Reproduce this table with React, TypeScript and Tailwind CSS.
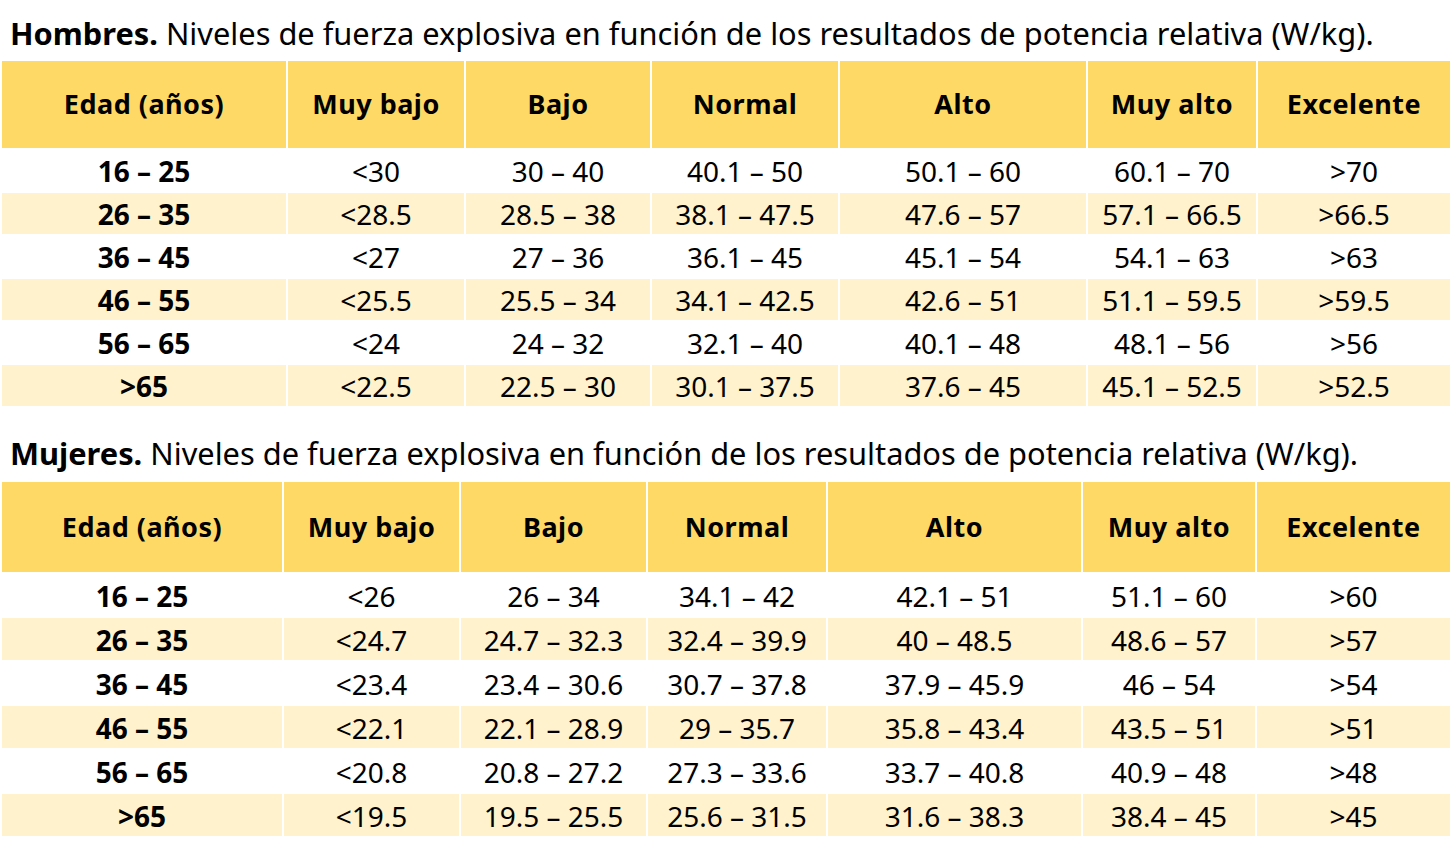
const headers = ['Edad (años)', 'Muy bajo', 'Bajo', 'Normal', 'Alto', 'Muy alto', 'Excelente'];

const men = [
  ['16 – 25', '<30', '30 – 40', '40.1 – 50', '50.1 – 60', '60.1 – 70', '>70'],
  ['26 – 35', '<28.5', '28.5 – 38', '38.1 – 47.5', '47.6 – 57', '57.1 – 66.5', '>66.5'],
  ['36 – 45', '<27', '27 – 36', '36.1 – 45', '45.1 – 54', '54.1 – 63', '>63'],
  ['46 – 55', '<25.5', '25.5 – 34', '34.1 – 42.5', '42.6 – 51', '51.1 – 59.5', '>59.5'],
  ['56 – 65', '<24', '24 – 32', '32.1 – 40', '40.1 – 48', '48.1 – 56', '>56'],
  ['>65', '<22.5', '22.5 – 30', '30.1 – 37.5', '37.6 – 45', '45.1 – 52.5', '>52.5'],
];

const women = [
  ['16 – 25', '<26', '26 – 34', '34.1 – 42', '42.1 – 51', '51.1 – 60', '>60'],
  ['26 – 35', '<24.7', '24.7 – 32.3', '32.4 – 39.9', '40 – 48.5', '48.6 – 57', '>57'],
  ['36 – 45', '<23.4', '23.4 – 30.6', '30.7 – 37.8', '37.9 – 45.9', '46 – 54', '>54'],
  ['46 – 55', '<22.1', '22.1 – 28.9', '29 – 35.7', '35.8 – 43.4', '43.5 – 51', '>51'],
  ['56 – 65', '<20.8', '20.8 – 27.2', '27.3 – 33.6', '33.7 – 40.8', '40.9 – 48', '>48'],
  ['>65', '<19.5', '19.5 – 25.5', '25.6 – 31.5', '31.6 – 38.3', '38.4 – 45', '>45'],
];

interface TableProps {
  rows: string[][];
  cols: string;
  headH: string;
  rowH: string;
}

function LevelTable({ rows, cols, headH, rowH }: TableProps) {
  return (
    <div className={`mx-[2px] grid gap-[2px] ${cols}`}>
      {headers.map((h) => (
        <div
          key={h}
          className={`flex items-center justify-center bg-[#ffd966] text-[27px] font-bold tracking-[0.5px] ${headH}`}
        >
          {h}
        </div>
      ))}
      {rows.map((row, i) =>
        row.map((cell, j) => (
          <div
            key={`${i}-${j}`}
            className={`flex items-center justify-center text-[28px] ${rowH} ${
              i % 2 === 1 ? 'bg-[#fff2cc]' : 'bg-white'
            } ${j === 0 ? 'font-bold' : ''}`}
          >
            {cell}
          </div>
        ))
      )}
    </div>
  );
}

export default function App() {
  return (
    <div className="h-[853px] w-[1454px] bg-white pt-[15px] font-['Noto_Sans',sans-serif] text-black">
      <div className="pl-[10px] text-[30.8px] leading-[36px]">
        <span className="font-bold">Hombres.</span> Niveles de fuerza explosiva en función de los resultados de potencia relativa (W/kg).
      </div>
      <div className="mt-[10px]">
        <LevelTable
          rows={men}
          cols="grid-cols-[284px_176px_184px_186px_246px_168px_192px]"
          headH="h-[87px]"
          rowH="h-[41px]"
        />
      </div>

      <div className="mt-[29px] pl-[10px] text-[30.8px] leading-[36px]">
        <span className="font-bold">Mujeres.</span> Niveles de fuerza explosiva en función de los resultados de potencia relativa (W/kg).
      </div>
      <div className="mt-[11px]">
        <LevelTable
          rows={women}
          cols="grid-cols-[280px_175px_185px_178px_253px_172px_193px]"
          headH="h-[90px]"
          rowH="h-[42px] pt-[2px]"
        />
      </div>
    </div>
  );
}
